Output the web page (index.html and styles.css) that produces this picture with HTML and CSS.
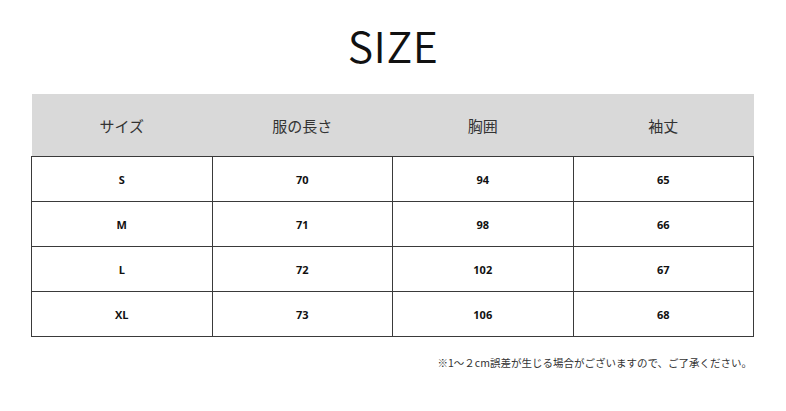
FILE: index.html
```html
<!DOCTYPE html>
<html lang="ja">
<head>
<meta charset="utf-8">
<link rel="stylesheet" href="styles.css">
</head>
<body>
<div class="page">
  <h1 class="title">SIZE</h1>
  <table class="size-table">
    <thead>
      <tr><th>サイズ</th><th>服の長さ</th><th>胸囲</th><th>袖丈</th></tr>
    </thead>
    <tbody>
      <tr><td>S</td><td>70</td><td>94</td><td>65</td></tr>
      <tr><td>M</td><td>71</td><td>98</td><td>66</td></tr>
      <tr><td>L</td><td>72</td><td>102</td><td>67</td></tr>
      <tr><td>XL</td><td>73</td><td>106</td><td>68</td></tr>
    </tbody>
  </table>
  <p class="note">※1～２cm誤差が生じる場合がございますので、ご了承ください。</p>
</div>
</body>
</html>
```
FILE: styles.css
```css
html, body {
  margin: 0;
  padding: 0;
  background: #fff;
}
.page {
  width: 786px;
  padding-top: 14px;
  font-family: "Noto Sans CJK JP", "Noto Sans", sans-serif;
  color: #222;
}
.title {
  margin: 0 0 20px 0;
  text-align: center;
  font-size: 43px;
  font-weight: 350;
  line-height: 60px;
  color: #111;
  letter-spacing: 0.5px;
}
.size-table {
  margin-left: 31px;
  width: 723px;
  border-collapse: collapse;
  table-layout: fixed;
}
.size-table th {
  background: #d9d9d9;
  height: 62px;
  padding: 0;
  font-size: 15px;
  font-weight: 400;
  color: #333;
  text-align: center;
}
.size-table td {
  height: 44px;
  padding: 0;
  border: 1.5px solid #3a3a3a;
  text-align: center;
  font-family: "Open Sans", "Noto Sans", sans-serif;
  font-weight: 700;
  font-size: 11px;
  color: #111;
}
.note {
  margin: 16px 0 0 0;
  width: 752px;
  text-align: right;
  font-size: 10.5px;
  color: #333;
  line-height: 20px;
}
```
